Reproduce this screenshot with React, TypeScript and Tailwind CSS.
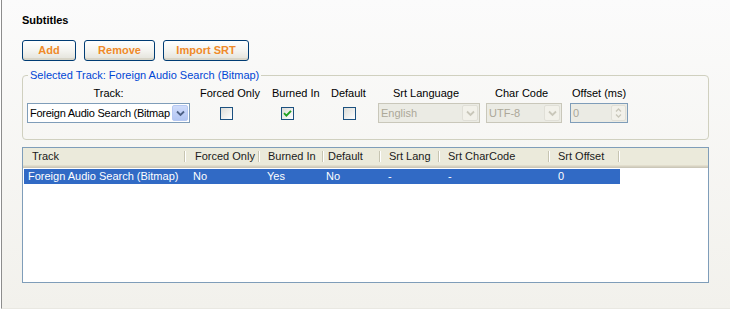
import React from "react";

const cols = [
  { w: "w-[162px]", hp: "pl-[8px]", rp: "pl-[4px]", h: "Track", r: "Foreign Audio Search (Bitmap)" },
  { w: "w-[74px]", hp: "pl-[9px]", rp: "pl-[7px]", h: "Forced Only", r: "No" },
  { w: "w-[64px]", hp: "pl-[8px]", rp: "pl-[7px]", h: "Burned In", r: "Yes" },
  { w: "w-[57px]", hp: "pl-[4px]", rp: "pl-[2px]", h: "Default", r: "No" },
  { w: "w-[59px]", hp: "pl-[8px]", rp: "pl-[7px]", h: "Srt Lang", r: "-" },
  { w: "w-[110px]", hp: "pl-[8px]", rp: "pl-[8px]", h: "Srt CharCode", r: "-" },
  { w: "w-[70px]", hp: "pl-[8px]", rp: "pl-[8px]", h: "Srt Offset", r: "0" },
];

function XpButton({ label, w }: { label: string; w: string }) {
  return (
    <button
      className={`${w} h-[21px] rounded-[3px] border border-[#003c74] bg-gradient-to-b from-white via-[#f4f4f0] to-[#e3e2da] font-bold text-[#ef8a2a] shadow-[inset_0_-2px_0_#d8d5c8]`}
    >
      {label}
    </button>
  );
}

function Chevron({ color }: { color: string }) {
  return (
    <svg width="9" height="7" viewBox="0 0 9 7">
      <path d="M1 1.5 L4.5 5 L8 1.5" fill="none" stroke={color} strokeWidth="1.8" />
    </svg>
  );
}

function CheckBox({ checked }: { checked?: boolean }) {
  return (
    <div className="w-[13px] h-[13px] border border-[#1c5180] bg-gradient-to-br from-[#dcdcd7] to-white flex items-center justify-center">
      {checked && (
        <svg width="9" height="9" viewBox="0 0 9 9">
          <path d="M1 4.2 L3.4 6.6 L8 1.8" fill="none" stroke="#21a121" strokeWidth="1.9" />
        </svg>
      )}
    </div>
  );
}

function DisabledSelect({ w, value }: { w: string; value: string }) {
  return (
    <div className={`${w} h-[20px] border border-[#c9c7ba] bg-[#ebebe4] flex items-center pl-[2px] pr-[1px]`}>
      <span className="flex-1 text-[#aca899] whitespace-nowrap overflow-hidden">{value}</span>
      <div className="w-[16px] h-[16px] rounded-[2px] bg-[#f2f1ea] border border-[#e0dfd7] flex items-center justify-center">
        <Chevron color="#c9c7ba" />
      </div>
    </div>
  );
}

export default function App() {
  return (
    <div className="w-[736px] h-[320px] bg-white font-['Liberation_Sans',sans-serif] text-[11px] leading-[13px] text-black">
      <div className="ml-[1px] w-[729px] h-[309px] border-l border-[#8d8d8d] border-b border-b-[#e9e8e2] bg-gradient-to-b from-[#fbfbfb] to-[#f2f1ec] pl-[20px] pt-[14px] flex flex-col">
        <div className="font-bold">Subtitles</div>

        <div className="mt-[13px] flex items-center gap-[8px]">
          <XpButton label="Add" w="w-[54px]" />
          <XpButton label="Remove" w="w-[71px]" />
          <XpButton label="Import SRT" w="w-[86px]" />
        </div>

        <fieldset className="mt-[8px] w-[687px] border border-[#d0d0bf] rounded-[4px] px-[4px] pb-[16px]">
          <legend className="ml-[1px] px-[2px] text-[#0046d5]">Selected Track: Foreign Audio Search (Bitmap)</legend>
          <div className="mt-[5px] flex">
            <div className="w-[163px] text-center">Track:</div>
            <div className="ml-[10px] w-[72px]">Forced Only</div>
            <div className="w-[59px]">Burned In</div>
            <div className="w-[62px]">Default</div>
            <div className="w-[102px]">Srt Language</div>
            <div className="w-[77px]">Char Code</div>
            <div>Offset (ms)</div>
          </div>
          <div className="mt-[3px] flex items-center">
            <div className="w-[163px] h-[20px] border border-[#7f9db9] bg-white flex items-center pl-[2px] pr-[1px]">
              <span className="flex-1 whitespace-nowrap overflow-hidden tracking-[-0.25px]">Foreign Audio Search (Bitmap</span>
              <div className="w-[16px] h-[16px] rounded-[2px] bg-gradient-to-b from-[#d0dcfb] to-[#b2c6f3] border border-[#b6c8f2] flex items-center justify-center">
                <Chevron color="#4d6185" />
              </div>
            </div>
            <div className="ml-[30px]"><CheckBox /></div>
            <div className="ml-[48px]"><CheckBox checked /></div>
            <div className="ml-[49px]"><CheckBox /></div>
            <div className="ml-[22px]"><DisabledSelect w="w-[102px]" value="English" /></div>
            <div className="ml-[6px]"><DisabledSelect w="w-[76px]" value="UTF-8" /></div>
            <div className="ml-[8px] w-[58px] h-[20px] border border-[#7f9db9] bg-[#ebebe4] flex items-center pl-[2px] pr-[1px]">
              <span className="flex-1 text-[#aca899]">0</span>
              <div className="w-[15px] h-[16px] rounded-[2px] bg-[#f2f1ea] border border-[#e0dfd7] flex flex-col items-center justify-center gap-[2px]">
                <svg width="7" height="4" viewBox="0 0 7 4"><path d="M1 3.5 L3.5 1 L6 3.5" fill="none" stroke="#c9c7ba" strokeWidth="1.3" /></svg>
                <svg width="7" height="4" viewBox="0 0 7 4"><path d="M1 0.5 L3.5 3 L6 0.5" fill="none" stroke="#c9c7ba" strokeWidth="1.3" /></svg>
              </div>
            </div>
          </div>
        </fieldset>

        <div className="mt-[7px] w-[687px] h-[136px] border border-[#7f9db9] bg-white flex flex-col">
          <div className="h-[20px] bg-[#ebeadb] flex shadow-[inset_0_-1px_0_#cbc7b8,inset_0_-2px_0_#d6d2c2,inset_0_-3px_0_#e2decd]">
            <div className="w-[1px]" />
            {cols.map((c) => (
              <div key={c.h} className={`${c.w} flex h-[17px]`}>
                <div className={`flex-1 ${c.hp} flex items-center whitespace-nowrap font-normal text-[#1a1a1a]`}>{c.h}</div>
                <div className="my-[3px] w-[2px] border-l border-[#c7c5b2] border-r border-r-white" />
              </div>
            ))}
          </div>
          <div className="mt-[1px] ml-[1px] flex h-[15px] w-max bg-[#316ac5] text-white">
            {cols.map((c) => (
              <div key={c.h} className={`${c.w} ${c.rp} flex items-center whitespace-nowrap overflow-hidden`}>{c.r}</div>
            ))}
          </div>
        </div>
      </div>
    </div>
  );
}
